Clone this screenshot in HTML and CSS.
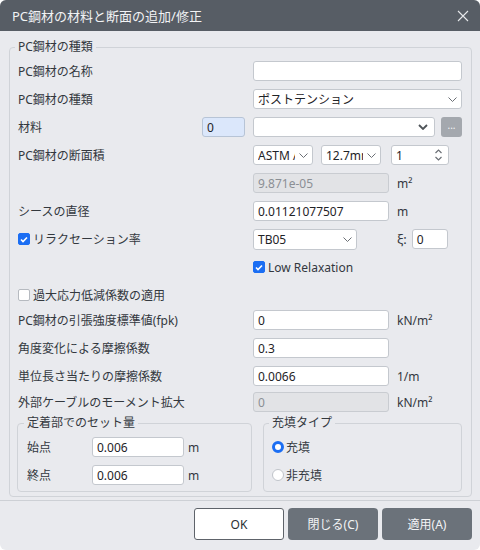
FILE: index.html
```html
<!DOCTYPE html>
<html lang="ja">
<head>
    <meta charset="UTF-8">
    <meta name="viewport" content="width=device-width, initial-scale=1.0">
    <title>PC鋼材の材料と断面の追加/修正</title>
    <link rel="stylesheet" href="styles.css">
</head>
<body>
    <div class="dialog">
        <div class="titlebar">
            <span>PC鋼材の材料と断面の追加/修正</span>
            <svg class="close" width="12" height="12" viewBox="0 0 12 12"><path d="M1 1 11 11M11 1 1 11" stroke="#e6e8eb" stroke-width="1.1"/></svg>
        </div>

        <div class="content">
            <fieldset class="group">
                <legend>PC鋼材の種類</legend>

                <div class="row">
                    <div class="lbl">PC鋼材の名称</div>
                    <div class="input w-full"></div>
                </div>

                <div class="row">
                    <div class="lbl">PC鋼材の種類</div>
                    <div class="input select w-full">
                        <span>ポストテンション</span>
                        <svg width="9" height="5" viewBox="0 0 9 5"><path d="M.5.5 4.5 4.5 8.5.5" fill="none" stroke="#6b6f75"/></svg>
                    </div>
                </div>

                <div class="row">
                    <div class="lbl lbl-split">
                        <span>材料</span>
                        <div class="input input-id">0</div>
                    </div>
                    <div class="input select w-mat">
                        <span></span>
                        <svg width="10" height="6" viewBox="0 0 10 6"><path d="M1 1 5 5 9 1" fill="none" stroke="#4e5358" stroke-width="1.8"/></svg>
                    </div>
                    <div class="more-btn">...</div>
                </div>

                <div class="row">
                    <div class="lbl">PC鋼材の断面積</div>
                    <div class="input select w-small">
                        <span class="clip">ASTM A416</span>
                        <svg width="9" height="5" viewBox="0 0 9 5"><path d="M.5.5 4.5 4.5 8.5.5" fill="none" stroke="#6b6f75"/></svg>
                    </div>
                    <div class="input select w-small gap8">
                        <span class="clip">12.7mm</span>
                        <svg width="9" height="5" viewBox="0 0 9 5"><path d="M.5.5 4.5 4.5 8.5.5" fill="none" stroke="#6b6f75"/></svg>
                    </div>
                    <div class="input select w-spin gap10">
                        <span>1</span>
                        <svg width="7" height="12" viewBox="0 0 7 12"><path d="M.5 4 3.5 1 6.5 4M.5 8 3.5 11 6.5 8" fill="none" stroke="#6b6f75" stroke-width="1.2"/></svg>
                    </div>
                </div>

                <div class="row">
                    <div class="lbl"></div>
                    <div class="input disabled w-mid">9.871e-05</div>
                    <span class="unit">m²</span>
                </div>

                <div class="row">
                    <div class="lbl">シースの直径</div>
                    <div class="input w-mid">0.01121077507</div>
                    <span class="unit">m</span>
                </div>

                <div class="row">
                    <div class="lbl check-lbl">
                        <span class="checkbox on"><svg width="8" height="7" viewBox="0 0 8 7"><path d="M1 3.5 3 5.5 7 1.5" fill="none" stroke="#fff" stroke-width="1.6"/></svg></span>
                        リラクセーション率
                    </div>
                    <div class="input select w-tb">
                        <span>TB05</span>
                        <svg width="9" height="5" viewBox="0 0 9 5"><path d="M.5.5 4.5 4.5 8.5.5" fill="none" stroke="#6b6f75"/></svg>
                    </div>
                    <span class="xi">ξ:</span>
                    <div class="input w-xi">0</div>
                </div>

                <div class="row">
                    <div class="lbl"></div>
                    <div class="check-lbl">
                        <span class="checkbox on"><svg width="8" height="7" viewBox="0 0 8 7"><path d="M1 3.5 3 5.5 7 1.5" fill="none" stroke="#fff" stroke-width="1.6"/></svg></span>
                        Low Relaxation
                    </div>
                </div>

                <div class="row tight">
                    <div class="check-lbl">
                        <span class="checkbox"></span>
                        過大応力低減係数の適用
                    </div>
                </div>

                <div class="row">
                    <div class="lbl">PC鋼材の引張強度標準値(fpk)</div>
                    <div class="input w-mid">0</div>
                    <span class="unit">kN/m²</span>
                </div>

                <div class="row">
                    <div class="lbl">角度変化による摩擦係数</div>
                    <div class="input w-mid">0.3</div>
                </div>

                <div class="row near">
                    <div class="lbl">単位長さ当たりの摩擦係数</div>
                    <div class="input w-mid">0.0066</div>
                    <span class="unit">1/m</span>
                </div>

                <div class="row last">
                    <div class="lbl">外部ケーブルのモーメント拡大</div>
                    <div class="input disabled w-mid">0</div>
                    <span class="unit">kN/m²</span>
                </div>

                <div class="subs">
                    <fieldset class="group sub sub-set">
                        <legend>定着部でのセット量</legend>
                        <div class="srow">
                            <div class="slbl">始点</div>
                            <div class="input w-set">0.006</div>
                            <span class="unit unit-s">m</span>
                        </div>
                        <div class="srow">
                            <div class="slbl">終点</div>
                            <div class="input w-set">0.006</div>
                            <span class="unit unit-s">m</span>
                        </div>
                    </fieldset>

                    <fieldset class="group sub sub-fill">
                        <legend>充填タイプ</legend>
                        <div class="srow">
                            <span class="radio on"></span>
                            <span>充填</span>
                        </div>
                        <div class="srow">
                            <span class="radio"></span>
                            <span>非充填</span>
                        </div>
                    </fieldset>
                </div>
            </fieldset>
        </div>

        <div class="footer">
            <button class="btn btn-ok">OK</button>
            <button class="btn">閉じる(C)</button>
            <button class="btn">適用(A)</button>
        </div>
    </div>
</body>
</html>
```

FILE: styles.css
```css
* {
    margin: 0;
    padding: 0;
    box-sizing: border-box;
}
body {
    background: #fff;
    font-family: "Noto Sans", "Noto Sans CJK JP", sans-serif;
    font-size: 12px;
    color: #33383e;
}
.dialog {
    width: 480px;
    height: 550px;
    background: #e9eaee;
    border-radius: 6px;
    overflow: hidden;
}
.titlebar {
    height: 31px;
    background: #575d65;
    color: #f2f3f5;
    font-size: 13px;
    display: flex;
    align-items: center;
    justify-content: space-between;
    padding: 0 11px 0 12px;
}
.content {
    padding: 8px 8px 0 9px;
}
.group {
    border: 1px solid #d0d3d8;
    border-radius: 4px;
    padding: 6px 9px 4px 8px;
}
.group legend {
    padding: 0 3px;
    margin-left: -3px;
    line-height: 16px;
}
.row {
    display: flex;
    align-items: center;
    height: 20px;
    margin-bottom: 8px;
}
.row.tight {
    margin-bottom: 5px;
}
.row.near {
    margin-bottom: 6px;
}
.row.last {
    margin-bottom: 0;
}
.lbl {
    width: 235px;
    flex: none;
    white-space: nowrap;
}
.lbl-split {
    display: flex;
    align-items: center;
    justify-content: space-between;
    padding-right: 8px;
}
.input {
    height: 20px;
    background: #fff;
    border: 1px solid #c4c8ce;
    border-radius: 3px;
    padding: 0 4px;
    display: flex;
    align-items: center;
    flex: none;
    color: #1f2327;
    white-space: nowrap;
}
.input.disabled {
    background: #e2e3e6;
    border-color: #c9ccd1;
    color: #8b8f95;
}
.input-id {
    width: 43px;
    background: #dbe7fb;
    border-color: #b7c4d6;
}
.select {
    justify-content: space-between;
    gap: 4px;
}
.select svg {
    flex: none;
}
.clip {
    overflow: hidden;
    white-space: nowrap;
    flex: 1;
}
.w-full { width: 209px; }
.w-mid { width: 136px; }
.w-mat { width: 182px; padding-right: 6px; }
.w-small { width: 60px; }
.w-spin { width: 58px; padding-right: 6px; }
.w-tb { width: 104px; height: 21px; }
.w-xi { width: 36px; margin-left: 5px; }
.w-set { width: 92px; }
.gap8 { margin-left: 8px; }
.gap10 { margin-left: 10px; }
.more-btn {
    width: 21px;
    height: 20px;
    margin-left: 6px;
    background: #a4a8ae;
    border-radius: 3px;
    color: #f4f5f6;
    font-size: 10px;
    line-height: 16px;
    text-align: center;
}
.unit {
    margin-left: 8px;
}
.unit-s {
    margin-left: 4px;
}
.xi {
    margin-left: 40px;
    font-size: 13px;
}
.check-lbl {
    display: flex;
    align-items: center;
    gap: 3px;
    white-space: nowrap;
}
.checkbox {
    width: 12px;
    height: 12px;
    border: 1px solid #b6bac0;
    border-radius: 2px;
    background: #fff;
    display: flex;
    align-items: center;
    justify-content: center;
}
.checkbox.on {
    background: #1b6ef3;
    border-color: #1b6ef3;
}
.subs {
    display: flex;
    gap: 11px;
    margin: 3px 0 0 -1px;
}
.sub {
    padding: 6px 9px 6px 9px;
}
.sub-set {
    width: 235px;
}
.sub-fill {
    width: 199px;
    padding-left: 8px;
}
.srow {
    display: flex;
    align-items: center;
    height: 20px;
    margin-bottom: 8px;
}
.srow:last-child {
    margin-bottom: 0;
}
.slbl {
    width: 65px;
    flex: none;
}
.radio {
    width: 12px;
    height: 12px;
    border: 1px solid #c0c4ca;
    border-radius: 50%;
    background: #fff;
    margin-right: 2px;
}
.radio.on {
    border: 3.5px solid #1b6ef3;
}
.footer {
    margin-top: 3px;
    border-top: 1px solid #cdd0d5;
    padding: 7px 8px 0;
    display: flex;
    justify-content: flex-end;
    gap: 4px;
}
.btn {
    width: 90px;
    height: 32px;
    border: none;
    border-radius: 4px;
    background: #6b727a;
    color: #f3f4f6;
    font-family: inherit;
    font-size: 12px;
}
.btn-ok {
    background: #fff;
    border: 1px solid #5e636a;
    border-radius: 3px;
    color: #2b2f33;
}
```
